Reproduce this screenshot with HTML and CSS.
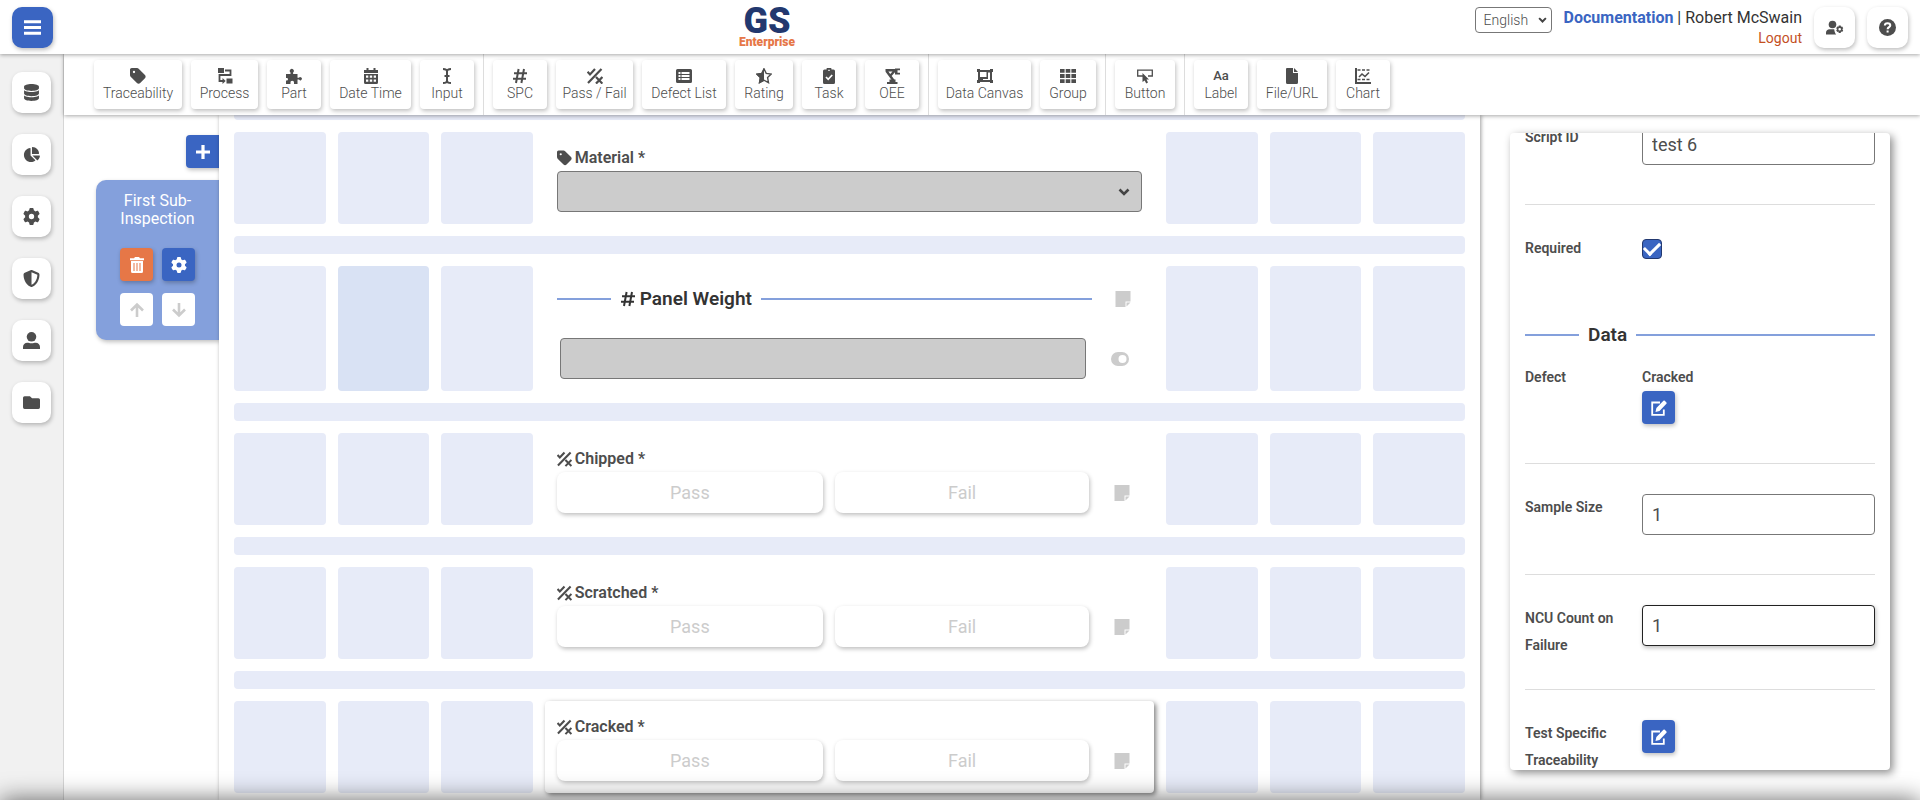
FILE: index.html
```html
<!DOCTYPE html>
<html lang="en">
<head>
<meta charset="UTF-8" />
<meta name="viewport" content="width=device-width, initial-scale=1.0" />
<title>GS Enterprise - Inspection Editor</title>
<link rel="stylesheet" href="styles.css">
</head>
<body>

<!-- Icon sprite -->
<svg class="sprite" aria-hidden="true">
  <symbol id="i-bars" viewBox="0 0 16 16"><path d="M0 1.2h16v2.8H0zM0 6.6h16v2.8H0zM0 12h16v2.8H0z"/></symbol>
  <symbol id="i-database" viewBox="0 0 448 512"><path d="M448 80v48c0 44.200-100.300 80-224 80S0 172.200 0 128V80C0 35.800 100.300 0 224 0S448 35.800 448 80zM393.200 214.700c20.800-7.400 39.900-16.900 54.800-28.600V288c0 44.200-100.300 80-224 80S0 332.200 0 288V186.100c14.900 11.800 34 21.200 54.800 28.600C99.700 230.700 159.500 240 224 240s124.300-9.300 169.200-25.300zM0 346.100c14.900 11.800 34 21.200 54.800 28.600C99.700 390.700 159.500 400 224 400s124.300-9.300 169.200-25.300c20.800-7.400 39.900-16.900 54.800-28.600V432c0 44.200-100.300 80-224 80S0 476.200 0 432V346.100z"/></symbol>
  <symbol id="i-pie" viewBox="0 0 576 512"><path d="M304 240V16.600c0-9 7-16.600 16-16.600C443.700 0 544 100.300 544 224c0 9-7.600 16-16.600 16H304zM32 272C32 150.700 122.100 50.300 239 34.300c9.200-1.300 17 6.100 17 15.400V288L412.500 444.500c6.700 6.700 6.200 17.700-1.500 23.100C371.800 495.600 323.800 512 272 512C139.500 512 32 404.600 32 272zm526.400 16c9.300 0 16.600 7.800 15.400 17c-7.700 55.900-34.600 105.600-73.900 142.300c-6 5.600-15.400 5.200-21.200-.7L320 288H558.400z"/></symbol>
  <symbol id="i-gear" viewBox="0 0 512 512"><path d="M495.900 166.600c3.200 8.700 .5 18.400-6.400 24.600l-43.300 39.400c1.100 8.300 1.700 16.800 1.700 25.400s-.6 17.100-1.700 25.400l43.300 39.400c6.900 6.200 9.600 15.900 6.400 24.600c-4.400 11.900-9.700 23.300-15.800 34.300l-4.700 8.100c-6.600 11-14 21.400-22.100 31.200c-5.900 7.200-15.700 9.600-24.500 6.800l-55.700-17.700c-13.400 10.300-28.200 18.900-44 25.400l-12.500 57.100c-2 9.100-9 16.300-18.200 17.800c-13.800 2.300-28 3.500-42.500 3.500s-28.700-1.200-42.500-3.500c-9.200-1.500-16.200-8.700-18.200-17.800l-12.500-57.100c-15.800-6.500-30.600-15.100-44-25.400L83.100 425.900c-8.800 2.800-18.600 .3-24.500-6.800c-8.100-9.800-15.500-20.200-22.100-31.200l-4.700-8.100c-6.100-11-11.400-22.400-15.800-34.300c-3.200-8.700-.5-18.400 6.400-24.600l43.300-39.400C64.600 273.100 64 264.600 64 256s.6-17.100 1.700-25.400L22.400 191.200c-6.900-6.200-9.600-15.900-6.400-24.600c4.400-11.900 9.700-23.300 15.800-34.300l4.700-8.100c6.600-11 14-21.400 22.100-31.200c5.900-7.200 15.700-9.600 24.500-6.800l55.700 17.700c13.400-10.300 28.200-18.900 44-25.400l12.500-57.100c2-9.100 9-16.300 18.200-17.800C227.300 1.200 241.500 0 256 0s28.700 1.200 42.500 3.500c9.200 1.500 16.200 8.700 18.200 17.800l12.500 57.100c15.800 6.500 30.600 15.100 44 25.400l55.700-17.700c8.800-2.800 18.600-.3 24.500 6.800c8.100 9.800 15.500 20.200 22.100 31.200l4.700 8.100c6.100 11 11.400 22.400 15.800 34.300zM256 336a80 80 0 1 0 0-160 80 80 0 1 0 0 160z"/></symbol>
  <symbol id="i-shield" viewBox="0 0 512 512"><path d="M256 0c4.600 0 9.200 1 13.400 2.900L457.700 82.800c22 9.300 38.400 31 38.300 57.200c-.5 99.200-41.300 280.700-213.600 363.200c-16.700 8-36.100 8-52.800 0C57.300 420.700 16.500 239.200 16 140c-.1-26.200 16.300-47.900 38.300-57.200L242.700 2.900C246.800 1 251.400 0 256 0zm0 66.800V444.800C394 378 431.100 230.100 432 141.400L256 66.800z"/></symbol>
  <symbol id="i-user" viewBox="0 0 16 16"><circle cx="8" cy="4.500" r="4.500"/><path d="M0 16v-2c0-2.500 1.800-4 4-4 1.500 0 2 .6 4 .6s2.500-.6 4-.6c2.200 0 4 1.500 4 4v2z"/></symbol>
  <symbol id="i-folder" viewBox="0 0 16 16"><path d="M1.500 2h5l2 2h6A1.500 1.500 0 0 1 16 5.500v7a1.500 1.500 0 0 1-1.500 1.500h-13A1.500 1.500 0 0 1 0 12.500v-9A1.500 1.500 0 0 1 1.500 2z"/></symbol>
  <symbol id="i-plus" viewBox="0 0 16 16"><path d="M6.400 1h3.200v5.400H15v3.200H9.600V15H6.400V9.600H1V6.400h5.400z"/></symbol>
  <symbol id="i-trash" viewBox="0 0 16 16"><path fill-rule="evenodd" d="M1 1.200h4L6 0h4l1 1.200h4v2H1zM2 4h12v10.500a1.500 1.500 0 0 1-1.500 1.500h-9A1.500 1.500 0 0 1 2 14.500zM4.500 6v8h1V6zm3 0v8h1V6zm3 0v8h1V6z"/></symbol>
  <symbol id="i-up" viewBox="0 0 16 16"><path d="M8 15V2.500M2 8.500l6-6 6 6" fill="none" stroke="currentColor" stroke-width="2.600"/></symbol>
  <symbol id="i-down" viewBox="0 0 16 16"><path d="M8 1v12.500M2 7.500l6 6 6-6" fill="none" stroke="currentColor" stroke-width="2.600"/></symbol>
  <symbol id="i-tag" viewBox="0 32 448 448"><path d="M0 80V229.500c0 17 6.700 33.300 18.700 45.300l176 176c25 25 65.500 25 90.500 0L418.700 317.300c25-25 25-65.500 0-90.500l-176-176c-12-12-28.300-18.700-45.300-18.700H48C21.500 32 0 53.500 0 80zm112 32a32 32 0 1 1 0 64 32 32 0 1 1 0-64z"/></symbol>
  <symbol id="i-process" viewBox="0 0 16 16"><path d="M1 0h6v5H1zM9.500 10.500h6v5h-6z"/><path d="M8 2.500h5.500v4.500H2.500v6H6" fill="none" stroke="currentColor" stroke-width="1.800"/><path d="M5.500 10l3.200 3-3.200 3z"/></symbol>
  <symbol id="i-part" viewBox="0 0 16 16"><path d="M0 6h4.500V4.500a2 2 0 1 1 2.600 0V6H11.500v3.800h1.400a1.600 1.600 0 1 1 0 1.800h-1.400V16H8v-1.500c0-.8-.6-1.700-1.800-1.700s-1.700.9-1.700 1.700V16H0v-3.500c1 .3 2-.3 2-1.300S1 9.700 0 10z"/></symbol>
  <symbol id="i-calendar" viewBox="0 0 16 16"><path fill-rule="evenodd" d="M1 2h2.500V0h2v2h5V0h2v2H15v3H1zM1 6h14v8.500a1.500 1.500 0 0 1-1.500 1.500h-11A1.500 1.500 0 0 1 1 14.500zM3 7.500v2.300h2.300V7.500zm3.800 0v2.300h2.400V7.500zm3.900 0v2.300H13V7.500zM3 11.500v2.300h2.300v-2.300zm3.800 0v2.300h2.400v-2.300zm3.900 0v2.300H13v-2.300z"/></symbol>
  <symbol id="i-cursor" viewBox="0 0 16 16"><path d="M4 1c2.500 0 4 .6 4 2.500v9c0 1.900-1.500 2.500-4 2.500M12 1c-2.500 0-4 .6-4 2.500v9c0 1.900 1.500 2.500 4 2.500M5.500 8h5" fill="none" stroke="currentColor" stroke-width="2"/></symbol>
  <symbol id="i-hash" viewBox="0 0 16 16"><path d="M6.600 1L4 15M12 1L9.400 15M2 5.300h13M1 10.700h13" fill="none" stroke="currentColor" stroke-width="2"/></symbol>
  <symbol id="i-passfail" viewBox="0 0 16 16"><path d="M1 15L14.500 1M.6 3.800L3 6.400 8 1M9 9l6.400 6.600M15.400 9L9 15.600" fill="none" stroke="currentColor" stroke-width="2.200"/></symbol>
  <symbol id="i-list" viewBox="0 0 16 16"><path fill-rule="evenodd" d="M1.500 1h13A1.500 1.500 0 0 1 16 2.500v11a1.500 1.500 0 0 1-1.500 1.500h-13A1.500 1.500 0 0 1 0 13.500v-11A1.500 1.500 0 0 1 1.500 1zM2.500 4v2h2V4zm3 0v2h8V4zm-3 3v2h2V7zm3 0v2h8V7zm-3 3v2h2v-2zm3 0v2h8v-2z"/></symbol>
  <symbol id="i-star" viewBox="0 0 16 16"><path d="M8 .8l2.200 4.600 5 .7-3.600 3.500.9 5L8 12.200l-4.500 2.400.9-5L.8 6.100l5-.7z" fill="none" stroke="currentColor" stroke-width="1.400"/><path d="M8 0v13l-5.300 2.600 1-5.800L0 6l5.500-.9z"/></symbol>
  <symbol id="i-task" viewBox="0 0 16 16"><path fill-rule="evenodd" d="M3.500 1.500h2a2.500 2.500 0 0 1 5 0h2A1.500 1.500 0 0 1 14 3v11.500a1.500 1.500 0 0 1-1.500 1.500h-9A1.500 1.500 0 0 1 2 14.500V3a1.500 1.500 0 0 1 1.500-1.500zM7.300 1.800h1.400V3H7.300z"/><path d="M5 9l2.200 2.300L11.200 7" fill="none" stroke="#fff" stroke-width="1.700"/></symbol>
  <symbol id="i-robot" viewBox="0 0 16 16"><path d="M3 14h10.500v2H3zM5.500 11.500h6V14h-6z"/><path d="M1.500 2.200H11M2.500 3l7 9.500M10.500 3l-4 4.500" fill="none" stroke="currentColor" stroke-width="2.400"/><path d="M11 .4h5v1.800h-2.500v2.600H16v1.800h-5z"/></symbol>
  <symbol id="i-canvas" viewBox="0 0 16 16"><path fill-rule="evenodd" d="M0 1h3v1h10V1h3v3h-1v8h1v3h-3v-1H3v1H0v-3h1V4H0zm3 3v5h6.500V4zm8 2v5H6v1h7V4.500h-2z"/></symbol>
  <symbol id="i-grid" viewBox="0 0 16 16"><path d="M0 1h4.600v3.800H0zM5.700 1h4.600v3.800H5.700zM11.400 1H16v3.800h-4.600zM0 6h4.600v4H0zM5.700 6h4.600v4H5.700zM11.400 6H16v4h-4.600zM0 11.200h4.600V15H0zM5.700 11.200h4.600V15H5.700zM11.400 11.200H16V15h-4.600z"/></symbol>
  <symbol id="i-button" viewBox="0 0 16 16"><path d="M6 8H.7V2.200h14.600V8H11" fill="none" stroke="currentColor" stroke-width="1.300"/><path d="M5.500 5l6.500 6.500H9.500l1.500 3-1.800 1-1.500-3L5.500 14z"/></symbol>
  <symbol id="i-file" viewBox="0 0 16 16"><path d="M3 0h6v5h5v9.500a1.500 1.500 0 0 1-1.500 1.500h-9A1.500 1.500 0 0 1 2 14.500V1a1 1 0 0 1 1-1zM10 0l4 4h-4z"/></symbol>
  <symbol id="i-chart" viewBox="0 0 16 16"><path d="M1 0v15h15" fill="none" stroke="currentColor" stroke-width="2"/><path d="M2.500 2h13M2.500 11.500h13" fill="none" stroke="currentColor" stroke-width="1.400" stroke-dasharray="3 1.500"/><path d="M4 9l3-3 3 2.500L14 4.500" fill="none" stroke="currentColor" stroke-width="1.600"/></symbol>
  <symbol id="i-note" viewBox="0 0 16 16"><path d="M.5 0h15v10.500H10.500V16H.5zM11.500 11.500h4L11.500 15.500z"/></symbol>
  <symbol id="i-toggle" viewBox="0 0 18 14"><path fill-rule="evenodd" d="M7 0h4a7 7 0 0 1 0 14H7A7 7 0 0 1 7 0zm4.500 3a4 4 0 1 0 0 8 4 4 0 0 0 0-8z"/></symbol>
  <symbol id="i-edit" viewBox="0 0 16 16"><path d="M9 2.500H1.200v12.300h11.600V9.500" fill="none" stroke="currentColor" stroke-width="1.800"/><path d="M12.400.8a1 1 0 0 1 1.400 0l1.600 1.600a1 1 0 0 1 0 1.400L8.500 11l-4 1 .9-4z"/></symbol>
  <symbol id="i-usergear" viewBox="0 0 18 16"><circle cx="6.500" cy="5" r="3.800"/><path d="M0 15v-1.800C0 11 1.500 9.700 3.600 9.700h4.600c.4 2.400.8 4 2 5.300zM12.700 6h2l.3 1.300 1.200-.3 1 1.700-.9 1 .9 1-1 1.700-1.200-.3-.3 1.300h-2l-.3-1.300-1.200.3-1-1.700.9-1-.9-1 1-1.700 1.200.3zm1 2.400a1.300 1.300 0 1 0 0 2.600 1.300 1.300 0 0 0 0-2.600z" fill-rule="evenodd"/></symbol>
  <symbol id="i-help" viewBox="0 0 16 16"><circle cx="8" cy="8" r="8"/><path d="M5.500 6.200C5.500 4.800 6.500 4 8 4s2.600.8 2.600 2.100c0 1.600-2.500 1.500-2.500 3.500M8.100 10.800v2" fill="none" stroke="#fff" stroke-width="1.900"/></symbol>
</svg>

<header class="topbar">
  <button class="tile tile-primary" aria-label="Menu"><svg class="icon"><use href="#i-bars"/></svg></button>
  <div class="logo">
    <span class="logo-mark">GS</span>
    <span class="logo-sub">Enterprise</span>
  </div>
  <div class="account">
    <select class="lang" aria-label="Language"><option>English</option></select>
    <div class="account-text">
      <div><a class="doc-link" href="#">Documentation</a> | Robert McSwain</div>
      <a class="logout" href="#">Logout</a>
    </div>
    <button class="tile" aria-label="Account settings"><svg class="icon icon-wide"><use href="#i-usergear"/></svg></button>
    <button class="tile" aria-label="Help"><svg class="icon"><use href="#i-help"/></svg></button>
  </div>
</header>

<div class="shell">
  <nav class="sidebar">
    <button class="tile" aria-label="Data"><svg class="icon"><use href="#i-database"/></svg></button>
    <button class="tile" aria-label="Reports"><svg class="icon"><use href="#i-pie"/></svg></button>
    <button class="tile" aria-label="Settings"><svg class="icon"><use href="#i-gear"/></svg></button>
    <button class="tile" aria-label="Security"><svg class="icon"><use href="#i-shield"/></svg></button>
    <button class="tile" aria-label="Users"><svg class="icon"><use href="#i-user"/></svg></button>
    <button class="tile" aria-label="Files"><svg class="icon"><use href="#i-folder"/></svg></button>
  </nav>

  <main class="main">
    <!-- Component toolbar -->
    <div class="toolbar">
      <div class="tools tools-capture">
        <button class="tool"><svg class="icon"><use href="#i-tag"/></svg>Traceability</button>
        <button class="tool"><svg class="icon"><use href="#i-process"/></svg>Process</button>
        <button class="tool"><svg class="icon"><use href="#i-part"/></svg>Part</button>
        <button class="tool"><svg class="icon"><use href="#i-calendar"/></svg>Date Time</button>
        <button class="tool"><svg class="icon"><use href="#i-cursor"/></svg>Input</button>
      </div>
      <div class="tools tools-checks">
        <button class="tool"><svg class="icon"><use href="#i-hash"/></svg>SPC</button>
        <button class="tool"><svg class="icon"><use href="#i-passfail"/></svg>Pass / Fail</button>
        <button class="tool"><svg class="icon"><use href="#i-list"/></svg>Defect List</button>
        <button class="tool"><svg class="icon"><use href="#i-star"/></svg>Rating</button>
        <button class="tool"><svg class="icon"><use href="#i-task"/></svg>Task</button>
        <button class="tool"><svg class="icon"><use href="#i-robot"/></svg>OEE</button>
      </div>
      <div class="tools tools-layout">
        <button class="tool"><svg class="icon"><use href="#i-canvas"/></svg>Data Canvas</button>
        <button class="tool"><svg class="icon"><use href="#i-grid"/></svg>Group</button>
      </div>
      <div class="tools tools-action">
        <button class="tool"><svg class="icon"><use href="#i-button"/></svg>Button</button>
      </div>
      <div class="tools tools-display">
        <button class="tool"><span class="icon-text">Aa</span>Label</button>
        <button class="tool"><svg class="icon"><use href="#i-file"/></svg>File/URL</button>
        <button class="tool"><svg class="icon"><use href="#i-chart"/></svg>Chart</button>
      </div>
    </div>

    <div class="workspace">
      <!-- Sub-inspections -->
      <aside class="subs">
        <button class="sq sq-tab" aria-label="Add sub-inspection"><svg class="icon"><use href="#i-plus"/></svg></button>
        <div class="sub-card">
          <div class="sub-title">First Sub-Inspection</div>
          <div class="sub-actions">
            <button class="sq sq-danger" aria-label="Delete"><svg class="icon"><use href="#i-trash"/></svg></button>
            <button class="sq" aria-label="Settings"><svg class="icon"><use href="#i-gear"/></svg></button>
            <button class="sq sq-muted" aria-label="Move up" disabled><svg class="icon"><use href="#i-up"/></svg></button>
            <button class="sq sq-muted" aria-label="Move down" disabled><svg class="icon"><use href="#i-down"/></svg></button>
          </div>
        </div>
      </aside>

      <!-- Inspection grid -->
      <section class="canvas">
        <div class="grid">
          <div class="bar"></div>

          <div class="cell"></div><div class="cell"></div><div class="cell"></div>
          <div class="item">
            <label class="item-label" for="material"><svg class="icon"><use href="#i-tag"/></svg>Material *</label>
            <select class="field field-off" id="material" disabled><option></option></select>
          </div>
          <div class="cell"></div><div class="cell"></div><div class="cell"></div>
          <div class="bar"></div>

          <div class="cell"></div><div class="cell cell-hover"></div><div class="cell"></div>
          <div class="item item-spc">
            <div class="item-row item-row-head">
              <h2 class="rule"><label class="rule-text" for="weight"><svg class="icon"><use href="#i-hash"/></svg>Panel Weight</label></h2>
              <button class="ghost" aria-label="Note"><svg class="icon"><use href="#i-note"/></svg></button>
            </div>
            <div class="item-row item-row-input">
              <input class="field field-off" id="weight" type="text" disabled>
              <button class="ghost" aria-label="Toggle"><svg class="icon icon-toggle"><use href="#i-toggle"/></svg></button>
            </div>
          </div>
          <div class="cell"></div><div class="cell"></div><div class="cell"></div>
          <div class="bar"></div>

          <div class="cell"></div><div class="cell"></div><div class="cell"></div>
          <div class="item">
            <div class="item-label"><svg class="icon"><use href="#i-passfail"/></svg>Chipped *</div>
            <div class="item-row">
              <div class="choices"><button class="choice" disabled>Pass</button><button class="choice" disabled>Fail</button></div>
              <button class="ghost" aria-label="Note"><svg class="icon"><use href="#i-note"/></svg></button>
            </div>
          </div>
          <div class="cell"></div><div class="cell"></div><div class="cell"></div>
          <div class="bar"></div>

          <div class="cell"></div><div class="cell"></div><div class="cell"></div>
          <div class="item">
            <div class="item-label"><svg class="icon"><use href="#i-passfail"/></svg>Scratched *</div>
            <div class="item-row">
              <div class="choices"><button class="choice" disabled>Pass</button><button class="choice" disabled>Fail</button></div>
              <button class="ghost" aria-label="Note"><svg class="icon"><use href="#i-note"/></svg></button>
            </div>
          </div>
          <div class="cell"></div><div class="cell"></div><div class="cell"></div>
          <div class="bar"></div>

          <div class="cell"></div><div class="cell"></div><div class="cell"></div>
          <div class="item item-selected">
            <div class="item-label"><svg class="icon"><use href="#i-passfail"/></svg>Cracked *</div>
            <div class="item-row">
              <div class="choices"><button class="choice" disabled>Pass</button><button class="choice" disabled>Fail</button></div>
              <button class="ghost" aria-label="Note"><svg class="icon"><use href="#i-note"/></svg></button>
            </div>
          </div>
          <div class="cell"></div><div class="cell"></div><div class="cell"></div>
        </div>
      </section>

      <!-- Properties -->
      <aside class="props">
        <div class="props-card">
          <div class="props-body">
            <div class="prop">
              <label for="script-id">Script ID</label>
              <input class="field" id="script-id" type="text" value="test 6">
            </div>
            <div class="prop">
              <label for="required">Required</label>
              <input class="check" id="required" type="checkbox" checked>
            </div>
            <h2 class="rule rule-section"><span class="rule-text">Data</span></h2>
            <div class="prop prop-first">
              <span>Defect</span>
              <div class="prop-value">Cracked<button class="sq" aria-label="Edit defect"><svg class="icon"><use href="#i-edit"/></svg></button></div>
            </div>
            <div class="prop">
              <label for="sample">Sample Size</label>
              <input class="field" id="sample" type="text" value="1">
            </div>
            <div class="prop">
              <label for="ncu">NCU Count on Failure</label>
              <input class="field field-active" id="ncu" type="text" value="1">
            </div>
            <div class="prop">
              <span>Test Specific Traceability</span>
              <div class="prop-value"><button class="sq" aria-label="Edit traceability"><svg class="icon"><use href="#i-edit"/></svg></button></div>
            </div>
          </div>
        </div>
      </aside>
    </div>
  </main>
</div>

<footer class="bottom-shade"></footer>
</body>
</html>
```
FILE: styles.css
```css
:root {
  --font-body: Roboto, "Liberation Sans", sans-serif;
  --blue: #3a65c2;
  --blue-soft: #84a0dc;
  --orange: #e67747;
  --text: #4d4d4d;
  --text-dark: #333;
  --cell: #e7ebf8;
  --shadow: 1px 2px 4px rgba(0,0,0,0.25);
  --chevron: url("data:image/svg+xml,%3Csvg xmlns='http://www.w3.org/2000/svg' viewBox='0 0 12 8'%3E%3Cpath d='M1.500 1.500L6 6l4.500-4.500' fill='none' stroke='%23444' stroke-width='2.600'/%3E%3C/svg%3E");
}

* { box-sizing: border-box; }

body {
  margin: 0;
  height: 100vh; overflow: hidden;
  display: flex; flex-direction: column;
  font-family: var(--font-body); font-size: 16px;
  color: var(--text); background: #fff;
}

button, input, select { font-family: inherit; color: inherit; margin: 0; }
button { border: none; padding: 0; cursor: pointer; }
a { text-decoration: none; }
.sprite { position: absolute; width: 0; height: 0; }
.icon { width: 16px; height: 16px; fill: currentColor; flex: none; display: block; }

/* Header */
.topbar {
  position: relative; z-index: 3; flex: none;
  height: 54px; padding: 0 12px;
  display: grid; grid-template-columns: 1fr auto 1fr; align-items: center;
  background: #fff; box-shadow: 0 1px 4px rgba(0,0,0,0.35);
}
.tile {
  width: 41px; height: 41px; border-radius: 10px;
  display: flex; align-items: center; justify-content: center;
  background: #fff; box-shadow: var(--shadow);
}
.tile .icon { width: 17px; height: 17px; }
.tile .icon-wide { width: 18px; }
.tile-primary { background: var(--blue); color: #fff; }
.logo { display: flex; flex-direction: column; align-items: center; width: 54px; margin-right: 386px; }
.logo-mark { font-size: 36px; line-height: 30px; font-weight: 900; color: #22386f; }
.logo-sub { font-size: 12px; line-height: 12px; font-weight: 900; color: var(--orange); }
.account { display: flex; align-items: center; justify-content: flex-end; gap: 12px; white-space: nowrap; }
.lang {
  appearance: none;
  width: 77px; height: 26px; padding: 0 8px; align-self: flex-start;
  border: 1px solid #777; border-radius: 4px; font-size: 14px; font-weight: 300;
  background: #fff var(--chevron) no-repeat right 4px center / 9px 6px;
}
.account-text { text-align: right; line-height: 22px; color: var(--text-dark); }
.doc-link { color: var(--blue); font-weight: 700; }
.logout { display: block; font-size: 14px; line-height: 18px; color: #c4501f; }

/* Sidebar */
.shell { flex: 1; min-height: 0; display: flex; }
.sidebar {
  flex: none; width: 64px; padding: 18px 12px;
  display: flex; flex-direction: column; gap: 21px;
  background: #f1f1f1; border-right: 1px solid #d6d6d6;
}
.sidebar .tile { width: 39px; }
.main { flex: 1; min-width: 0; display: flex; flex-direction: column; }

/* Component toolbar */
.toolbar {
  position: relative; z-index: 2; flex: none;
  display: flex; padding-left: 21px;
  background: #fff; box-shadow: 0 1px 4px rgba(0,0,0,0.35);
}
.tools { display: grid; gap: 9px; padding: 6px 9px; }
.tools + .tools { border-left: 1px solid #ddd; }
.tools-capture { grid-template-columns: 88px 67px 54px 81px 54px; }
.tools-checks { grid-template-columns: 54px 77px 84px 58px 54px 54px; }
.tools-layout { grid-template-columns: 93px 56px; }
.tools-action { grid-template-columns: 60px; }
.tools-display { grid-template-columns: 54px 70px 54px; }
.tool {
  height: 49px; border-radius: 4px;
  display: flex; flex-direction: column; align-items: center; justify-content: center;
  background: #fff; box-shadow: var(--shadow);
  font-size: 14px; line-height: 18px; font-weight: 300; white-space: nowrap;
}
.icon-text { font-size: 13px; line-height: 16px; font-weight: 500; }

.workspace { flex: 1; min-height: 0; display: flex; }

/* Sub-inspections */
.subs { flex: none; width: 155px; padding-top: 20px; display: flex; flex-direction: column; align-items: flex-end; gap: 12px; }
.sq {
  width: 33px; height: 33px; border-radius: 4px;
  display: flex; align-items: center; justify-content: center;
  background: var(--blue); color: #fff; box-shadow: var(--shadow);
}
.sq-tab { border-radius: 4px 0 0 4px; }
.sq-danger { background: var(--orange); }
.sq-muted { background: #fff; color: #ccc; box-shadow: none; }
.sub-card {
  width: 123px; padding: 12px 24px 14px; border-radius: 10px 0 0 10px;
  background: var(--blue-soft); box-shadow: var(--shadow);
}
.sub-title { text-align: center; color: #fff; font-size: 16px; line-height: 18px; margin-bottom: 20px; }
.sub-actions { display: grid; grid-template-columns: 33px 33px; gap: 12px 9px; }

/* Inspection grid */
.canvas {
  position: relative; z-index: 1;
  flex: 1; min-width: 0; overflow: hidden; padding: 0 15px;
  background: #fff; box-shadow: 1px 0 4px rgba(0,0,0,0.4);
}
.grid { display: grid; grid-template-columns: repeat(12, minmax(0, 1fr)); gap: 12px; margin-top: -13px; }
.bar { grid-column: 1 / -1; height: 18px; border-radius: 4px; background: var(--cell); }
.cell { border-radius: 4px; background: var(--cell); }
.cell-hover { background: #d9e2f4; }
.item { grid-column: span 6; padding: 12px; border-radius: 4px; }
.item-selected { box-shadow: 2px 2px 5px rgba(0,0,0,0.5); }
.item-label {
  display: flex; align-items: center; gap: 3px;
  font-size: 16px; line-height: 27px; font-weight: 600;
}
.item-label .icon { width: 15px; }
.item-row { display: grid; grid-template-columns: 1fr 53px; }
.item-row-head { grid-template-columns: 1fr 50px; height: 41px; align-items: center; }
.item-row-input { grid-template-columns: 1fr 56px; padding-left: 3px; margin-top: 19px; }
.ghost { padding-left: 12px; background: none; color: #ccc; display: flex; align-items: center; justify-content: center; }
.icon-toggle { width: 18px; height: 14px; }
.choices { display: flex; gap: 12px; }
.choice {
  flex: 254 0 0; height: 41px; border-radius: 8px;
  background: #fff; color: #ccc; font-size: 18px; box-shadow: var(--shadow);
}
.choice:first-child { flex-grow: 266; }

.field {
  width: 100%; height: 41px; padding: 0 9px;
  border: 1px solid #777; border-radius: 4px; background: #fff; font-size: 18px;
}
.field-off { background-color: #ccc; opacity: 1; }
select.field {
  appearance: none;
  background-image: var(--chevron); background-repeat: no-repeat;
  background-position: right 11px center; background-size: 12px 8px;
}
.field-active { border-color: #222; box-shadow: var(--shadow); }

.rule {
  flex: 1; margin: 0; display: flex; align-items: center; gap: 9px;
  font-size: 19px; line-height: 28px; font-weight: 600; color: var(--text-dark);
}
.rule::before { content: ""; width: 54px; height: 2px; background: var(--blue-soft); }
.rule::after { content: ""; flex: 1; height: 2px; background: var(--blue-soft); }
.rule-text { display: flex; align-items: center; gap: 4px; }
.rule-section { margin: 29px 0 15px; }

/* Properties */
.props { flex: none; width: 440px; padding: 18px 30px 30px; }
.props-card { height: 100%; overflow: hidden; padding: 0 15px; border-radius: 4px; background: #fff; box-shadow: 3px 3px 8px rgba(0,0,0,0.45); }
.props-body { margin-top: -39px; }
.prop {
  display: grid; grid-template-columns: 100px 1fr; column-gap: 17px; align-items: start;
  padding: 30px 0; font-size: 14px; line-height: 27px; font-weight: 600;
}
.prop + .prop { border-top: 1px solid #ddd; }
.prop-first { padding-top: 0; }
.prop .field { margin-bottom: 9px; }
.prop-value .sq { margin-bottom: 9px; }
.check {
  appearance: none; width: 20px; height: 20px; margin-top: 4px;
  border: 1px solid #22386f; border-radius: 4px;
  display: grid; place-items: center;
}
.check:checked { background: var(--blue); }
.check:checked::after {
  content: ""; width: 13px; height: 7px; margin-top: -4px;
  border: solid #fff; border-width: 0 0 3px 3px; transform: rotate(-45deg);
}

.bottom-shade { position: fixed; z-index: 4; left: 0; right: 0; top: 100%; height: 60px; box-shadow: 0 0 24px rgba(0,0,0,0.6); }
```
